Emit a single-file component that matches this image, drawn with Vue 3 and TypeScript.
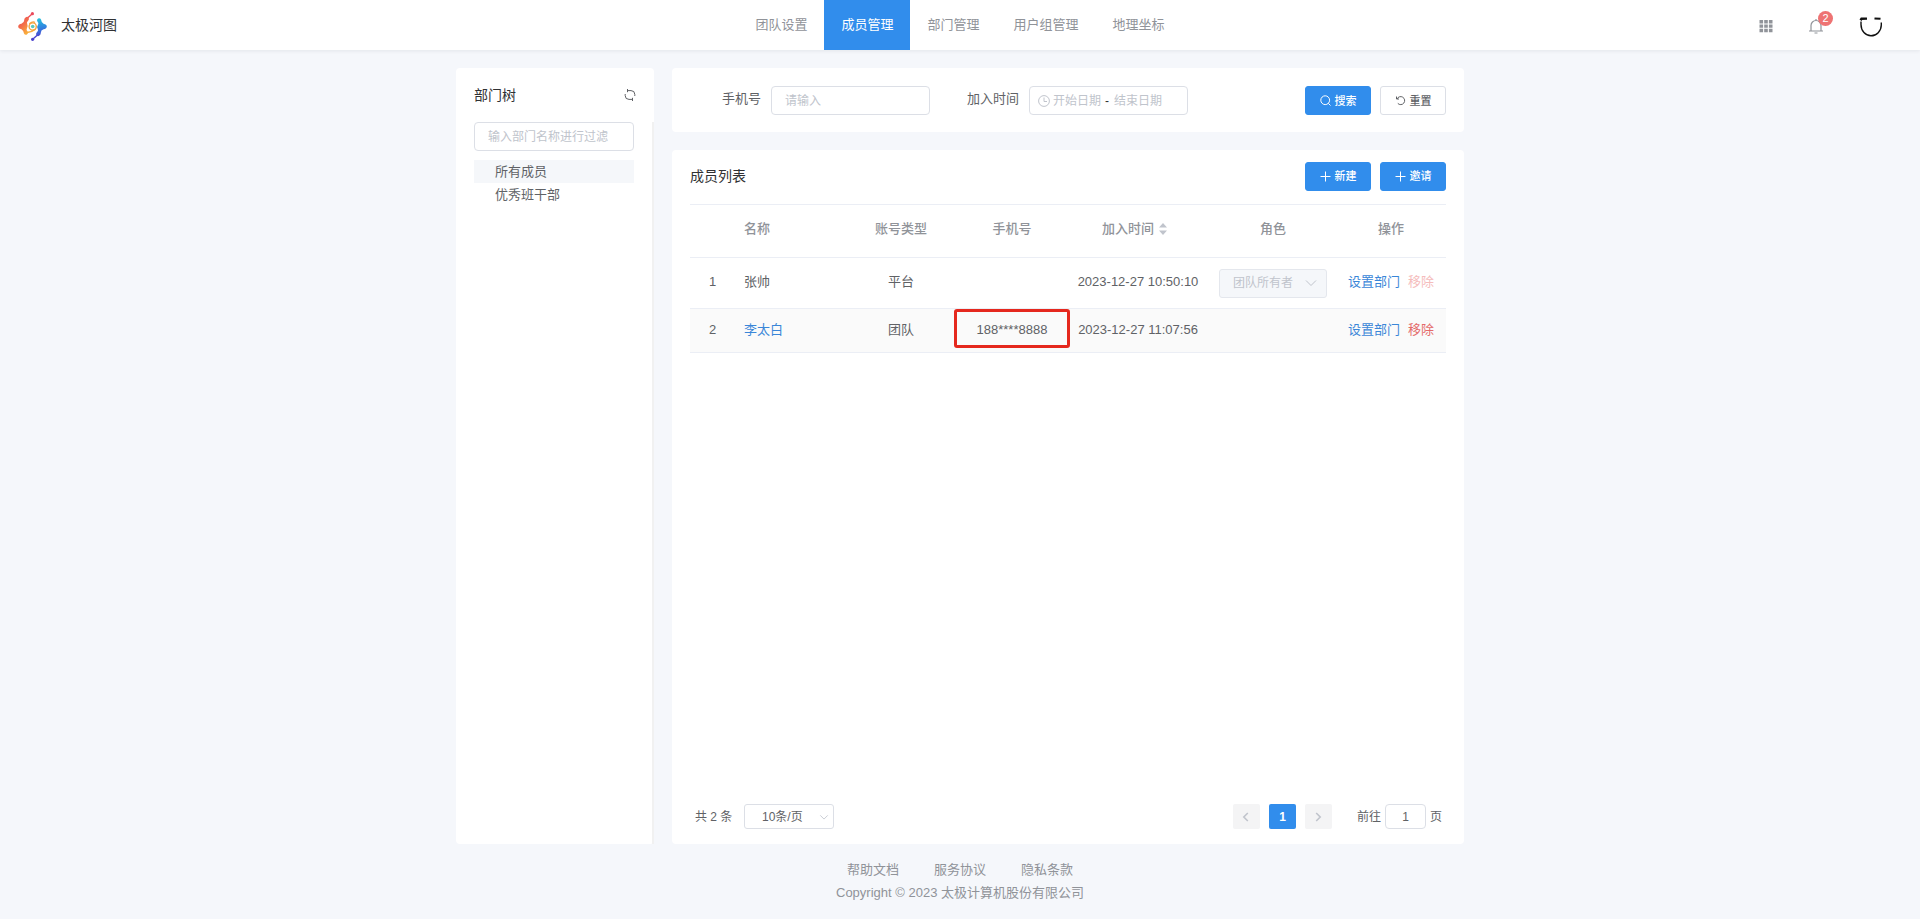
<script setup lang="ts">
import { ref } from 'vue'

interface Member {
  id: number
  name: string
  linked: boolean
  type: string
  phone: string
  joined: string
  role: string
  owner: boolean
}

const tabs: string[] = ['团队设置', '成员管理', '部门管理', '用户组管理', '地理坐标']
const activeTab = ref('成员管理')

const departments: string[] = ['所有成员', '优秀班干部']
const activeDepartment = ref('所有成员')

const members: Member[] = [
  { id: 1, name: '张帅', linked: false, type: '平台', phone: '', joined: '2023-12-27 10:50:10', role: '团队所有者', owner: true },
  { id: 2, name: '李太白', linked: true, type: '团队', phone: '188****8888', joined: '2023-12-27 11:07:56', role: '', owner: false },
]

const footerLinks: string[] = ['帮助文档', '服务协议', '隐私条款']

const filterText = ref('')
const phone = ref('')
const startDate = ref('')
const endDate = ref('')
const pageSize = ref('10')
const jumpPage = ref('1')

function resetSearch(): void {
  phone.value = ''
  startDate.value = ''
  endDate.value = ''
}
</script>

<template>
  <div class="page">
    <header class="topbar">
      <div class="brand">
        <svg class="logo" viewBox="0 0 30 30" aria-hidden="true">
          <defs>
            <linearGradient id="warm" x1="0" y1="0" x2="0.6" y2="1">
              <stop offset="0" stop-color="#ee4d5a" />
              <stop offset="0.5" stop-color="#f26a4b" />
              <stop offset="1" stop-color="#f9ac3c" />
            </linearGradient>
            <linearGradient id="cool" x1="0.4" y1="0" x2="0.5" y2="1">
              <stop offset="0" stop-color="#25c3dc" />
              <stop offset="0.5" stop-color="#2f86e0" />
              <stop offset="1" stop-color="#4b43cf" />
            </linearGradient>
          </defs>
          <path d="M14.3 1.8 9 6.5" stroke="#ee4d5a" stroke-width="1.4" />
          <circle cx="14.4" cy="1.7" r="1.6" fill="#ea4a5c" />
          <path d="M7.5 5.5Q9.5 4 10.8 6Q11.4 8 9.7 9.2Q8.4 10.2 9.3 12.2Q10.4 14.4 8.9 16.4Q8 18 9.5 19.2Q10.8 21 9 22.4Q7 23.3 6 21.5Q5.6 18.5 3.5 17.2Q.2 16.6.2 14.5Q.3 12.2 3.4 11.7Q6.2 10.8 6.2 8.2Q6 6.7 7.5 5.5Z" fill="url(#warm)" />
          <path d="M14.7 27.2 20 22.5" stroke="#4b43cf" stroke-width="1.4" />
          <circle cx="14.6" cy="27.3" r="1.6" fill="#4941cd" />
          <path d="M21.5 23.5Q19.5 25 18.2 23Q17.6 21 19.3 19.8Q20.6 18.8 19.7 16.8Q18.6 14.6 20.1 12.6Q21 11 19.5 9.8Q18.2 8 20 6.6Q22 5.7 23 7.5Q23.4 10.5 25.5 11.8Q28.8 12.4 28.8 14.5Q28.7 16.8 25.6 17.3Q22.8 18.2 22.8 20.8Q23 22.3 21.5 23.5Z" fill="url(#cool)" />
          <path d="M9 20.5Q14 20 17.6 17.2" fill="none" stroke="#f9ac3c" stroke-width="1.5" />
          <path d="M11.3 11.8Q15 8.800 17 10.500" fill="none" stroke="#f5a33f" stroke-width="1.3" />
          <circle cx="14.7" cy="14.5" r="3.6" fill="none" stroke="#f5a33f" stroke-width="1.4" />
          <circle cx="14.7" cy="14.5" r="1.8" fill="#5ccabc" />
        </svg>
        <span class="brand-name">太极河图</span>
      </div>
      <nav class="tabs">
        <a v-for="tab in tabs" :key="tab" href="#" class="tab" :class="{ active: tab === activeTab }" @click.prevent="activeTab = tab">{{ tab }}</a>
      </nav>
      <div class="tools">
        <button class="tool" type="button" aria-label="应用">
          <svg width="14" height="14" viewBox="0 0 14 14" fill="#909399">
            <path d="M.5 1h3.600v3.400H.5zM5.200 1h3.600v3.400H5.200zM9.900 1h3.600v3.400H9.900zM.5 5.400h3.600v3.400H.5zM5.200 5.400h3.600v3.400H5.200zM9.900 5.400h3.600v3.400H9.900zM.5 9.800h3.600v3.400H.5zM5.200 9.800h3.600v3.400H5.200zM9.900 9.800h3.600v3.400H9.900z" />
          </svg>
        </button>
        <button class="tool bell" type="button" aria-label="消息">
          <svg width="16" height="16" viewBox="0 0 16 16" fill="none" stroke="#909399" stroke-width="1.2">
            <path d="M1 13h14M3 13V7.500a5 5 0 0 1 10 0V13M8 2.500V1M6.500 15h3" />
          </svg>
          <span class="badge">2</span>
        </button>
        <button class="tool" type="button" aria-label="账户">
          <svg width="24" height="24" viewBox="0 0 24 24" fill="none" stroke="#111">
            <path d="M1.500 6.200 2.500 4.800 8 4.600" stroke-width="2.400" />
            <path d="M15.500 4.500 21.500 4.800" stroke-width="2" />
            <path d="M2 7.500v3C2 17 6.500 21.800 12 21.800S22.300 17 22.300 11V8.500" stroke-width="1.400" />
          </svg>
        </button>
      </div>
    </header>

    <main class="content">
      <aside class="card sidebar">
        <div class="sidebar-head">
          <h2 class="sidebar-title">部门树</h2>
          <button class="refresh" type="button" aria-label="刷新">
            <svg width="12" height="12" viewBox="0 0 12 12" fill="none" stroke="#606266">
              <path d="M3.500 1.600H7a3.800 3.800 0 0 1 3.800 3.800V7M8.500 10.400H5A3.800 3.800 0 0 1 1.200 6.600V5M3.500 0v3.200M8.500 8.800V12" />
            </svg>
          </button>
        </div>
        <div class="sidebar-body">
          <input v-model="filterText" class="field filter" type="text" placeholder="输入部门名称进行过滤" aria-label="输入部门名称进行过滤" />
          <ul class="tree">
            <li v-for="department in departments" :key="department">
              <button type="button" class="node" :class="{ current: department === activeDepartment }" @click="activeDepartment = department">{{ department }}</button>
            </li>
          </ul>
        </div>
      </aside>

      <div class="main-column">
        <form class="card search" @submit.prevent>
          <div class="search-item">
            <label for="phone">手机号</label>
            <input id="phone" v-model="phone" class="field phone" type="text" placeholder="请输入" />
          </div>
          <div class="search-item second">
            <label for="start-date">加入时间</label>
            <div class="field range">
              <svg width="12" height="12" viewBox="0 0 12 12" fill="none" stroke="#c0c4cc" aria-hidden="true">
                <circle cx="6" cy="6" r="5.400" />
                <path d="M6 2.500V6.500H9" />
              </svg>
              <input id="start-date" v-model="startDate" type="text" placeholder="开始日期" />
              <span class="dash">-</span>
              <input v-model="endDate" type="text" placeholder="结束日期" aria-label="结束日期" />
            </div>
          </div>
          <div class="actions">
            <button class="btn primary" type="submit">
              <svg width="11" height="11" viewBox="0 0 11 11" fill="none" stroke="currentColor" aria-hidden="true"><circle cx="5.200" cy="5.200" r="4.400" /><path d="M8.300 8.300 10.500 10.500" /></svg>
              搜索
            </button>
            <button class="btn" type="button" @click="resetSearch">
              <svg width="11" height="11" viewBox="0 0 11 11" fill="none" stroke="currentColor" aria-hidden="true"><path d="M1.500 1.500V4H4M2 4A4 4 0 1 1 2.800 8.400" /></svg>
              重置
            </button>
          </div>
        </form>

        <section class="card list">
          <div class="list-head">
            <h2 class="list-title">成员列表</h2>
            <div class="actions">
              <button v-for="action in ['新建', '邀请']" :key="action" class="btn primary" type="button">
                <svg width="11" height="11" viewBox="0 0 11 11" fill="none" stroke="currentColor" aria-hidden="true"><path d="M5.500.5v10M.5 5.500h10" /></svg>
                {{ action }}
              </button>
            </div>
          </div>

          <table class="members">
            <colgroup>
              <col class="c-index" />
              <col class="c-name" />
              <col class="c-type" />
              <col class="c-phone" />
              <col class="c-time" />
              <col class="c-role" />
              <col class="c-ops" />
            </colgroup>
            <thead>
              <tr>
                <th></th>
                <th class="left">名称</th>
                <th>账号类型</th>
                <th>手机号</th>
                <th>
                  <button class="sort" type="button">
                    加入时间
                    <svg width="8" height="14" viewBox="0 0 8 14" fill="#c0c4cc" aria-hidden="true"><path d="M0 5.500 4 1 8 5.500zM0 8.500H8L4 13z" /></svg>
                  </button>
                </th>
                <th>角色</th>
                <th>操作</th>
              </tr>
            </thead>
            <tbody>
              <tr v-for="member in members" :key="member.id" :class="{ striped: !member.owner }">
                <td>{{ member.id }}</td>
                <td class="left">
                  <a v-if="member.linked" href="#" class="link">{{ member.name }}</a>
                  <template v-else>{{ member.name }}</template>
                </td>
                <td>{{ member.type }}</td>
                <td class="phone-cell">
                  {{ member.phone }}
                  <span v-if="member.phone" class="marker"></span>
                </td>
                <td>{{ member.joined }}</td>
                <td class="role-cell">
                  <div v-if="member.role" class="select role">
                    <select disabled aria-label="角色">
                      <option>{{ member.role }}</option>
                    </select>
                    <svg width="12" height="12" viewBox="0 0 12 12" fill="none" stroke="#c0c4cc" aria-hidden="true"><path d="M1 3.500 6 8.500 11 3.500" /></svg>
                  </div>
                </td>
                <td>
                  <div class="ops">
                    <button class="link" type="button">设置部门</button>
                    <button class="link danger" type="button" :disabled="member.owner">移除</button>
                  </div>
                </td>
              </tr>
            </tbody>
          </table>

          <div class="pagination">
            <span class="total">共 {{ members.length }} 条</span>
            <div class="select size">
              <select v-model="pageSize" aria-label="每页条数">
                <option value="10">10条/页</option>
                <option value="20">20条/页</option>
              </select>
              <svg width="10" height="10" viewBox="0 0 12 12" fill="none" stroke="#c0c4cc" aria-hidden="true"><path d="M1.500 4 6 8.500 10.500 4" /></svg>
            </div>
            <div class="pager">
              <button class="page-btn" type="button" disabled aria-label="上一页">
                <svg width="10" height="10" viewBox="0 0 10 10" fill="none" stroke="#c0c4cc" stroke-width="1.600"><path d="M6.800 1 2.800 5 6.800 9" /></svg>
              </button>
              <button class="page-btn current" type="button">1</button>
              <button class="page-btn" type="button" disabled aria-label="下一页">
                <svg width="10" height="10" viewBox="0 0 10 10" fill="none" stroke="#c0c4cc" stroke-width="1.600"><path d="M3.200 1 7.200 5 3.200 9" /></svg>
              </button>
            </div>
            <label class="jump">
              前往
              <input v-model="jumpPage" class="field" type="text" />
              页
            </label>
          </div>
        </section>
      </div>
    </main>

    <footer class="footer">
      <div class="footer-links">
        <a v-for="item in footerLinks" :key="item" href="#">{{ item }}</a>
      </div>
      <div>Copyright © 2023 太极计算机股份有限公司</div>
    </footer>
  </div>
</template>

<style>
body {
  background: #f5f7fb;
}
</style>

<style scoped>
.page {
  display: flex;
  flex-direction: column;
  min-height: 100vh;
  color: #606266;
  font: 13px/18px "Liberation Sans", "Noto Sans CJK SC", sans-serif;
}
.page *,
.page *::before {
  box-sizing: border-box;
}
button,
input,
select {
  font: inherit;
  color: inherit;
  margin: 0;
}
button {
  border: 0;
  padding: 0;
  background: none;
  cursor: pointer;
}
a {
  color: inherit;
  text-decoration: none;
}
svg {
  display: block;
  flex: none;
}
h2 {
  margin: 0;
  font-weight: 400;
  color: #303133;
}

.topbar {
  display: grid;
  grid-template-columns: 1fr auto 1fr;
  height: 50px;
  background: #fff;
  box-shadow: 0 1px 4px rgba(0, 21, 41, 0.08);
}
.brand {
  display: flex;
  align-items: center;
  gap: 13px;
  padding-left: 18px;
}
.logo {
  width: 30px;
  height: 30px;
  margin-top: 4px;
}
.brand-name {
  font-size: 14px;
  color: #303133;
}
.tabs {
  display: flex;
}
.tab {
  padding: 0 17px;
  line-height: 50px;
  color: #909399;
}
.tab.active {
  background: #318dec;
  color: #fff;
}
.tools {
  display: flex;
  align-items: center;
  justify-content: flex-end;
  gap: 35px;
  padding: 2px 37px 0 0;
}
.bell {
  position: relative;
}
.badge {
  position: absolute;
  top: -7px;
  right: -9px;
  width: 15px;
  height: 15px;
  border-radius: 8px;
  background: #ee7373;
  color: #fff;
  font-size: 11px;
  line-height: 15px;
}

.content {
  flex: 1;
  display: flex;
  gap: 18px;
  width: 100%;
  max-width: 1008px;
  margin: 18px auto 0;
}
.card {
  background: #fff;
  border-radius: 4px;
}
.sidebar {
  flex: none;
  width: 198px;
  display: flex;
  flex-direction: column;
}
.sidebar-head {
  display: flex;
  align-items: center;
  justify-content: space-between;
  height: 54px;
  padding: 0 18px;
}
.sidebar-title {
  font-size: 14px;
}
.sidebar-body {
  flex: 1;
  padding: 0 18px;
  border-right: 2px solid #f1f1f1;
}
.field {
  height: 29px;
  border: 1px solid #dcdfe6;
  border-radius: 4px;
  background: #fff;
  padding: 0 13px;
  outline: 0;
  font-size: 12px;
}
input::placeholder {
  color: #c0c4cc;
  opacity: 1;
}
.filter {
  width: 100%;
}
.tree {
  list-style: none;
  margin: 9px 0 0;
  padding: 0;
}
.node {
  display: block;
  width: 100%;
  height: 23px;
  padding-left: 21px;
  text-align: left;
  line-height: 23px;
}
.node.current {
  background: #f5f7fa;
}

.main-column {
  flex: 1;
  min-width: 0;
  display: flex;
  flex-direction: column;
  gap: 18px;
}
.search {
  display: flex;
  align-items: center;
  padding: 18px 18px 17px;
}
.search-item {
  display: flex;
  flex: none;
  gap: 10px;
  padding-left: 32px;
}
.search-item label {
  line-height: 25px;
}
.search-item.second {
  padding-left: 37px;
}
.search-item .field {
  flex: none;
  width: 159px;
}
.range {
  display: flex;
  align-items: center;
  padding: 0 8px;
}
.range input {
  width: 55px;
  padding: 0 0 0 3px;
  border: 0;
  outline: 0;
  background: none;
}
.dash {
  width: 6px;
  color: #303133;
}
.actions {
  display: flex;
  gap: 9px;
  margin-left: auto;
}
.btn {
  display: flex;
  align-items: center;
  justify-content: center;
  gap: 4px;
  width: 66px;
  height: 29px;
  border: 1px solid #dcdfe6;
  border-radius: 3px;
  background: #fff;
  font-size: 11px;
  font-weight: 500;
}
.btn.primary {
  border-color: #318dec;
  background: #318dec;
  color: #fff;
}

.list {
  flex: 1;
  display: flex;
  flex-direction: column;
  padding: 0 18px 15px;
}
.list-head {
  display: flex;
  align-items: center;
  height: 54px;
  padding-bottom: 2px;
}
.list-title {
  font-size: 14px;
}
.members {
  width: 100%;
  table-layout: fixed;
  border-collapse: separate;
  border-spacing: 0;
  border-top: 1px solid #ebeef5;
}
.c-index { width: 45px; }
.c-name { width: 109px; }
.c-type { width: 114px; }
.c-phone { width: 108px; }
.c-time { width: 144px; }
.c-role { width: 126px; }
.c-ops { width: 110px; }
.members th,
.members td {
  height: 44px;
  padding: 0 9px 2px;
  border-bottom: 1px solid #ebeef5;
  text-align: center;
}
.members th {
  height: 53px;
  padding-bottom: 4px;
  font-weight: 500;
  color: #909399;
}
.members .left {
  text-align: left;
}
.members .role-cell {
  padding-bottom: 0;
}
.members tbody tr:first-child td {
  height: 51px;
}
.striped td {
  background: #fafafa;
}
.sort {
  display: flex;
  align-items: center;
  gap: 5px;
  margin: 0 auto;
  padding-right: 7px;
}
.phone-cell {
  position: relative;
}
.marker {
  position: absolute;
  inset: 0 -4px 4px;
  border: 3px solid #e5281e;
  border-radius: 3px;
}
.link {
  color: #3a86d8;
}
.link.danger {
  color: #e46a6a;
}
.link.danger:disabled {
  color: #f5bcbc;
}
.ops {
  display: flex;
  justify-content: center;
  gap: 8px;
  white-space: nowrap;
}
.select {
  position: relative;
}
.select select {
  display: block;
  appearance: none;
  width: 100%;
  border: 1px solid #dcdfe6;
  border-radius: 3px;
  outline: 0;
  background: #fff;
  font-size: 12px;
}
.select svg {
  position: absolute;
  top: 0;
  bottom: 0;
  margin: auto;
  pointer-events: none;
}
.role select {
  height: 29px;
  padding: 0 13px;
  border-color: #e4e7ed;
  background: #f5f7fa;
  color: #c0c4cc;
  opacity: 1;
}
.role svg {
  right: 10px;
}
.size {
  width: 90px;
}
.size select {
  height: 25px;
  padding: 0 17px;
}
.size svg {
  right: 5px;
}

.pagination {
  display: flex;
  align-items: center;
  margin-top: auto;
  padding: 0 4px 0 5px;
  font-size: 12px;
}
.total {
  width: 49px;
}
.pager {
  display: flex;
  gap: 9px;
  margin-left: auto;
}
.page-btn {
  display: flex;
  align-items: center;
  justify-content: center;
  width: 27px;
  height: 25px;
  border-radius: 2px;
  background: #f4f4f5;
}
.page-btn.current {
  background: #318dec;
  color: #fff;
  font-weight: 700;
}
.jump {
  display: flex;
  align-items: center;
  gap: 4px;
  margin-left: 25px;
}
.jump .field {
  width: 41px;
  height: 25px;
  padding: 0;
  text-align: center;
}

.footer {
  padding: 14px 0 15px;
  color: #909399;
  line-height: 23px;
  text-align: center;
}
.footer-links {
  display: flex;
  justify-content: center;
  gap: 35px;
}
</style>
